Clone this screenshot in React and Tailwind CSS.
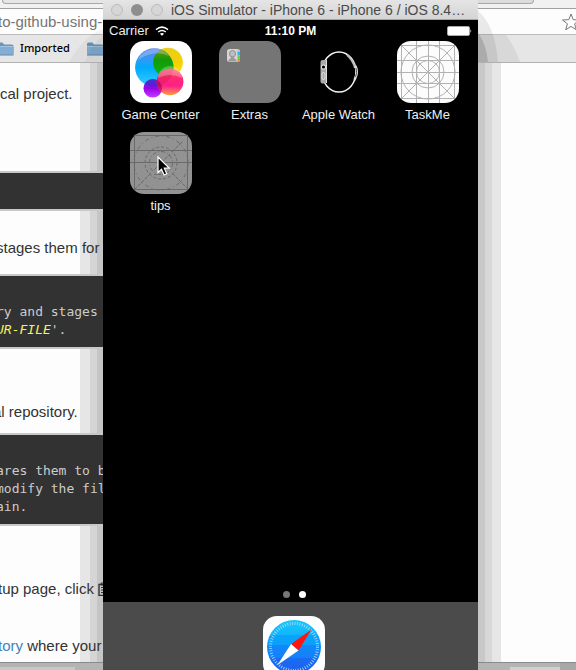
import React from 'react';

const sans = "font-['Liberation_Sans',Arial,sans-serif]";
const mono = "font-['DejaVu_Sans_Mono',monospace]";

function Folder() {
  return (
    <svg width="18" height="16" viewBox="0 0 18 16" className="shrink-0">
      <path d="M1 3q0-1.500 1.500-1.500h4l1.500 2h8q1.500 0 1.500 1.500v8.500H1z" fill="#6a94bb" />
      <path d="M1 5.500h16.500v8H1z" fill="#84add3" />
      <path d="M1 5.500h16.500" stroke="#a5c5e0" />
      <path d="M1 14h16.500" stroke="#5b83a8" />
    </svg>
  );
}

function Clipboard() {
  return (
    <svg width="12" height="14" viewBox="0 0 12 14" className="ml-1 shrink-0" fill="none" stroke="#333">
      <path d="M1 2.500h10v11H1z" strokeWidth="1.400" />
      <path d="M3 1h6v2H3zM3 5.500h6M3 8h6M3 10.500h6" />
    </svg>
  );
}

function GameCenterIcon() {
  return (
    <svg width="62" height="62" viewBox="0 0 62 62" className="block">
      <defs>
        <linearGradient id="blue" x1="0" y1="0" x2="0" y2="1">
          <stop offset="0" stopColor="#5d83e8" /><stop offset=".3" stopColor="#2f9bf5" />
          <stop offset=".5" stopColor="#00aaff" /><stop offset="1" stopColor="#35d2ff" />
        </linearGradient>
        <linearGradient id="yellow" x1="0" y1="0" x2="0" y2="1">
          <stop offset="0" stopColor="#e8cf20" /><stop offset=".5" stopColor="#f5d000" /><stop offset="1" stopColor="#ffe800" />
        </linearGradient>
        <linearGradient id="green" x1="0" y1="0" x2="0" y2="1">
          <stop offset="0" stopColor="#7c9410" /><stop offset=".4" stopColor="#139a05" /><stop offset="1" stopColor="#0cb414" />
        </linearGradient>
        <linearGradient id="pink" x1="0" y1="0" x2="0" y2="1">
          <stop offset="0" stopColor="#ff6a70" /><stop offset=".35" stopColor="#ff2a70" />
          <stop offset=".65" stopColor="#ff1f8d" /><stop offset="1" stopColor="#ffa040" />
        </linearGradient>
        <linearGradient id="purple" x1="0" y1="0" x2="0" y2="1">
          <stop offset="0" stopColor="#5a4cc8" /><stop offset=".5" stopColor="#9a00e8" /><stop offset="1" stopColor="#c040ff" />
        </linearGradient>
        <clipPath id="blueClip"><circle cx="24.300" cy="26.500" r="19.200" /></clipPath>
        <clipPath id="pinkClip"><circle cx="40" cy="40.800" r="13.400" /></clipPath>
      </defs>
      <rect width="62" height="62" rx="14" fill="#fff" />
      <circle cx="38" cy="21.500" r="14.800" fill="url(#yellow)" />
      <circle cx="24.300" cy="26.500" r="19.200" fill="url(#blue)" />
      <circle cx="38" cy="21.500" r="14.800" fill="url(#green)" clipPath="url(#blueClip)" />
      <path d="M8 19a18 18 0 0 1 31-4q-15-7-31 4z" fill="#fff" opacity=".25" />
      <circle cx="22.800" cy="47.300" r="9.300" fill="url(#purple)" />
      <circle cx="22.800" cy="47.300" r="9.300" fill="#3a22d0" opacity=".6" clipPath="url(#blueClip)" />
      <circle cx="40" cy="40.800" r="13.400" fill="url(#pink)" />
      <circle cx="24.300" cy="26.500" r="19.200" fill="#d01850" opacity=".35" clipPath="url(#pinkClip)" />
      <circle cx="22.800" cy="47.300" r="9.300" fill="#a00060" opacity=".6" clipPath="url(#pinkClip)" />
      <path d="M28 37a12 12 0 0 1 24 0q-12-6-24 0z" fill="#fff" opacity=".25" />
    </svg>
  );
}

function ExtrasIcon() {
  return (
    <svg width="62" height="62" viewBox="0 0 62 62" className="block">
      <rect width="62" height="62" rx="14" fill="#757575" />
      <rect x="8" y="8" width="13" height="13" rx="2.500" fill="#d6d6d6" />
      <path d="M18.500 8q2.500 0 2.500 2.500V12h-2.500z" fill="#b9b9b9" />
      <path d="M18.500 11H21v3.500h-2.500z" fill="#2fb4f0" />
      <path d="M18.500 14.500H21V18h-2.500z" fill="#6cd04a" />
      <path d="M18.500 18H21q0 3-2.500 3z" fill="#f08a28" />
      <ellipse cx="13.500" cy="12.800" rx="3" ry="3.300" fill="#bdbdbd" stroke="#8d8d8d" />
      <path d="M9 20.500q.5-2.500 3-3.500v-1.500h3V17q2.500 1 3 3.500z" fill="#9a9a9a" />
    </svg>
  );
}

function WatchIcon() {
  return (
    <svg width="62" height="62" viewBox="0 0 62 62" className="block" fill="none">
      <ellipse cx="31" cy="31" rx="17" ry="20" stroke="#f4f4f4" strokeWidth="1.500" />
      <path d="M39 14q6 5 8 13" stroke="#bbb" strokeWidth="2" />
      <path d="M47.500 25q3 6-1 14" stroke="#ddd" strokeWidth="2.500" />
      <path d="M48 27q1.500 5-.5 9" stroke="#555" />
      <rect x="12.500" y="19" width="6.500" height="23.500" rx="2" fill="#a9a9a9" />
      <path d="M18.500 19v23" stroke="#ddd" />
      <circle cx="15.500" cy="26" r="2.600" fill="#e8e8e8" />
      <circle cx="15.500" cy="26" r="1.600" fill="#000" />
      <rect x="14" y="31.500" width="3" height="7" rx="1.500" stroke="#eee" strokeWidth=".8" />
    </svg>
  );
}

function TaskMeIcon() {
  return (
    <svg width="62" height="62" viewBox="0 0 62 62" className="block" fill="none">
      <rect width="62" height="62" rx="14" fill="#fcfcfc" />
      <g stroke="#b2b2b2" strokeWidth="1">
        <path d="M4.500 4v54M19.500 0v62M31.500 0v62M42.500 0v62M57.500 4v54" />
        <path d="M4 4.500h54M0 19.500h62M0 31.500h62M0 42.500h62M4 57.500h54" />
        <path d="M4 4l54 54M58 4L4 58" />
        <circle cx="31" cy="31" r="27" />
        <circle cx="31" cy="31" r="16" />
        <circle cx="31" cy="31" r="11.500" />
      </g>
    </svg>
  );
}

function TipsIcon() {
  return (
    <svg width="62" height="62" viewBox="0 0 62 62" className="block" fill="none">
      <rect width="62" height="62" rx="14" fill="#929292" />
      <g stroke="#6a6a6a" strokeWidth="1">
        <path d="M4.500 4v54M57.500 4v54M4 3.500h54M0 18.500h62M0 30.500h62M4 57.500h54" />
        <path d="M4 58L21 41M42 20l11-11M42 41l16 16M24 38l16-16" strokeDasharray="4 1" />
        <circle cx="31" cy="31" r="27" strokeDasharray="4 3 1 3" />
        <circle cx="31" cy="31" r="16" strokeDasharray="3 2" />
        <circle cx="31" cy="31" r="11.500" strokeDasharray="4 2 1 2" />
        <path d="M24 42.500h12" strokeDasharray="3 1" />
      </g>
    </svg>
  );
}

function SafariIcon() {
  return (
    <svg width="62" height="62" viewBox="0 0 62 62" className="block shrink-0" fill="none">
      <defs>
        <linearGradient id="sky" x1="0" y1="0" x2="0" y2="1">
          <stop offset="0" stopColor="#18c6fc" /><stop offset=".27" stopColor="#12b6fc" />
          <stop offset=".27" stopColor="#0aa4fc" /><stop offset=".46" stopColor="#0aa0fc" />
          <stop offset=".46" stopColor="#1288fa" /><stop offset=".7" stopColor="#1480f8" />
          <stop offset=".7" stopColor="#1a6cf2" /><stop offset="1" stopColor="#1c60ee" />
        </linearGradient>
      </defs>
      <rect width="62" height="62" rx="14" fill="#fff" />
      <circle cx="31" cy="31" r="27" fill="url(#sky)" />
      <circle cx="31" cy="31" r="23.500" stroke="#a8dcff" strokeWidth="3" strokeDasharray=".8 1.660" />
      <path d="M48.500 13.500L35.500 34.500 28 28z" fill="#ff1510" />
      <path d="M14.500 49L28 28l7.500 6.500z" fill="#fff" />
    </svg>
  );
}

const apps = [
  { name: 'Game Center', Icon: GameCenterIcon },
  { name: 'Extras', Icon: ExtrasIcon },
  { name: 'Apple Watch', Icon: WatchIcon },
  { name: 'TaskMe', Icon: TaskMeIcon },
  { name: 'tips', Icon: TipsIcon, pointer: true },
];

function Pointer() {
  return (
    <svg width="14" height="20" viewBox="0 0 14 20" className="absolute left-[27px] top-6">
      <path d="M1 1v15.500l3.500-3.300 2.600 5.800 2.700-1.200-2.500-5.600h4.900z" fill="#000" stroke="#fff" strokeWidth="1.200" />
    </svg>
  );
}

function Browser() {
  return (
    <div className="flex h-full flex-col bg-[#fdfdfd]">
      <header>
        <div className="flex h-[9px] justify-between border-b border-[#a0a0a0] bg-[#f1f1f1]">
          <div className="ml-0.5 h-1 w-[120px] rounded-bl-md border-b border-l border-[#a8a8a8] bg-[#e6e6e6]" />
          <div className="mr-[42px] h-1 w-[60px] rounded-br-md border-b border-r border-[#a8a8a8] bg-[#dcdcdc]" />
        </div>
        <div className="flex h-[26px] items-center justify-between overflow-hidden border-b border-[#bdbdbd] bg-[#fdfdfd]">
          <input
            aria-label="Address"
            readOnly
            value="to-github-using-"
            className="-ml-0.5 w-[130px] bg-transparent text-[15px] leading-5 text-[#757575] outline-none"
          />
          <button type="button" aria-label="Bookmark this page" className="-mr-1 shrink-0">
            <svg width="18" height="18" viewBox="0 0 18 18" className="block" fill="#fff" stroke="#777">
              <path d="M9 1l2.200 5.700 6.300.3-4.900 3.800 1.700 6L9 13.400 3.700 16.800l1.700-6L.5 7l6.300-.3z" />
            </svg>
          </button>
        </div>
        <nav className="flex h-7 items-center border-b border-[#b0b0b0] bg-[#e6e6e6] font-['Noto_Sans',sans-serif] text-[11px] font-medium text-black">
          <a href="#imported" className="-ml-1 flex items-center gap-[6px]">
            <Folder />
            Imported
          </a>
          <a href="#folder" aria-label="Folder" className="ml-4"><Folder /></a>
        </nav>
      </header>
      <main className="flex min-h-0 flex-1">
        <article className="w-[103px] shrink-0 overflow-hidden whitespace-nowrap bg-[linear-gradient(to_right,#fdfdfd_80px,#e6e6e6_80px_90px,#d5d5d5_90px_97px,#c5c5c5_97px)] text-[15px] leading-5 text-[#333]">
          <p className="pt-[21px]">cal project.</p>
          <pre className="mt-[67px] h-10 border-y-2 border-[#c8c8c8] bg-[#323232]" />
          <p className="-ml-1 mt-[27px]">stages them for</p>
          <pre className="mt-4 border-y-2 border-[#c8c8c8] bg-[#323232] pb-2 pt-[27px] text-[13px] leading-[18px] text-[#ccc]">
            <code className={`-ml-1 block ${mono}`}>ry and stages</code>
            <code className={`-ml-1 block ${mono}`}><em className="text-[#f4f45a]">UR-FILE</em>'.</code>
          </pre>
          <p className="-ml-[7px] mt-[53px]">al repository.</p>
          <pre className="mt-[11px] border-y-2 border-[#c8c8c8] bg-[#323232] pb-2 pt-[27px] text-[13px] leading-[18px] text-[#ccc]">
            <code className={`-ml-1 block ${mono}`}>ares them to b</code>
            <code className={`-ml-1 block ${mono}`}>modify the fil</code>
            <code className={`-ml-1 block ${mono}`}>ain.</code>
          </pre>
          <p className="-ml-0.5 mt-[53px] flex items-center">tup page, click<Clipboard /></p>
          <p className="-ml-0.5 mt-[37px]"><a href="#repository" className="text-[#4183c4]">tory</a> where your</p>
        </article>
        <div className="ml-[375px] flex-1 bg-[linear-gradient(to_right,#c8c8c8_7px,#d8d8d8_7px_14px,#e6e6e6_14px_23px,#fdfdfd_23px)]" />
      </main>
      <footer className="flex h-2 shrink-0 border-t border-[#8a8a8a] bg-[#b4b4b4]">
        <div className="mt-1 h-1 w-[75px] bg-[#c8c8c8]" />
        <div className="ml-[435px] mt-1 h-1 w-[50px] bg-[#d0d0d0]" />
        <div className="h-full flex-1 bg-[#a8a8a8]" />
      </footer>
    </div>
  );
}

function WindowShadow() {
  return (
    <>
      <svg width="46" height="53" viewBox="0 0 46 53" className="absolute -left-[46px] top-[9px]" fill="#000">
        <path d="M46 20Q28 26 12 53h34z" opacity=".04" />
        <path d="M46 26Q34 36 28 53h18z" opacity=".04" />
      </svg>
      <svg width="46" height="53" viewBox="0 0 46 53" className="absolute left-[375px] top-[9px]" fill="#000">
        <path d="M0 26h28q9 12 14 27H0z" opacity=".06" />
        <path d="M0 2Q17 16 20 53H0z" opacity=".08" />
        <path d="M0 24Q8 34 10 53H0z" opacity=".14" />
      </svg>
    </>
  );
}

function Simulator() {
  return (
    <section className="absolute inset-y-0 left-[103px] w-[375px]">
      <WindowShadow />
      <div className="relative flex h-full flex-col overflow-hidden bg-black text-[13px] leading-4 text-[#eee]">
        <div className="flex h-5 shrink-0 items-center border-b border-[#a5a5a5] bg-gradient-to-b from-[#e5e5e5] to-[#d4d4d4] pl-2">
          <div className="flex gap-2">
            <button type="button" aria-label="Close" className="size-3 rounded-full border border-[#bdbdbd] bg-[#d6d6d6]" />
            <button type="button" aria-label="Minimize" className="size-3 rounded-full bg-[#8e8e8e]" />
            <button type="button" aria-label="Zoom" className="size-3 rounded-full border border-[#bdbdbd] bg-[#d6d6d6]" />
          </div>
          <h1 className="ml-2 whitespace-nowrap text-[14px] text-[#4a4a4a]">iOS Simulator - iPhone 6 - iPhone 6 / iOS 8.4…</h1>
        </div>
        <div className="grid h-[21px] shrink-0 grid-cols-3 items-center px-[6px]">
          <div className="flex items-center gap-[6px]">
            Carrier
            <svg width="14" height="10" viewBox="0 0 14 10" fill="none" stroke="#fff" strokeWidth="1.500">
              <path d="M1 3.600q6-5 12 0M3.200 6q3.800-3 7.600 0" />
              <path d="M7 9.700L4.900 7.700q2.100-1.500 4.200 0z" fill="#fff" stroke="none" />
            </svg>
          </div>
          <time className="text-center text-[12px] font-bold text-white">11:10 PM</time>
          <svg width="25" height="10" viewBox="0 0 25 10" className="justify-self-end">
            <rect x=".5" y=".5" width="22" height="9" rx="1.500" fill="#fff" stroke="#aaa" />
            <path d="M23.500 3q1.500 2 0 4z" fill="#fff" />
          </svg>
        </div>
        <div className="flex w-[382px] flex-1 flex-col">
          <ul className="grid grid-cols-4 gap-y-3 px-[13px]">
            {apps.map(({ name, Icon, pointer }) => (
              <li key={name}>
                <button type="button" className="mx-auto flex w-full flex-col items-center gap-1 whitespace-nowrap">
                  <span className="relative block">
                    <Icon />
                    {pointer && <Pointer />}
                  </span>
                  <span className="-mb-[3px]">{name}</span>
                </button>
              </li>
            ))}
          </ul>
          <div className="mt-auto flex justify-center gap-[9px] pb-1">
            <span className="size-[7px] rounded-full bg-[#777]" />
            <span className="size-[7px] rounded-full bg-white" />
          </div>
          <div className="flex h-[68px] justify-center overflow-hidden bg-[#4b4b4b] pt-[14px]">
            <button type="button" aria-label="Safari" className="size-[62px] shrink-0"><SafariIcon /></button>
          </div>
        </div>
      </div>
    </section>
  );
}

export default function App() {
  return (
    <div className={`relative h-screen overflow-hidden ${sans}`}>
      <Browser />
      <Simulator />
    </div>
  );
}
